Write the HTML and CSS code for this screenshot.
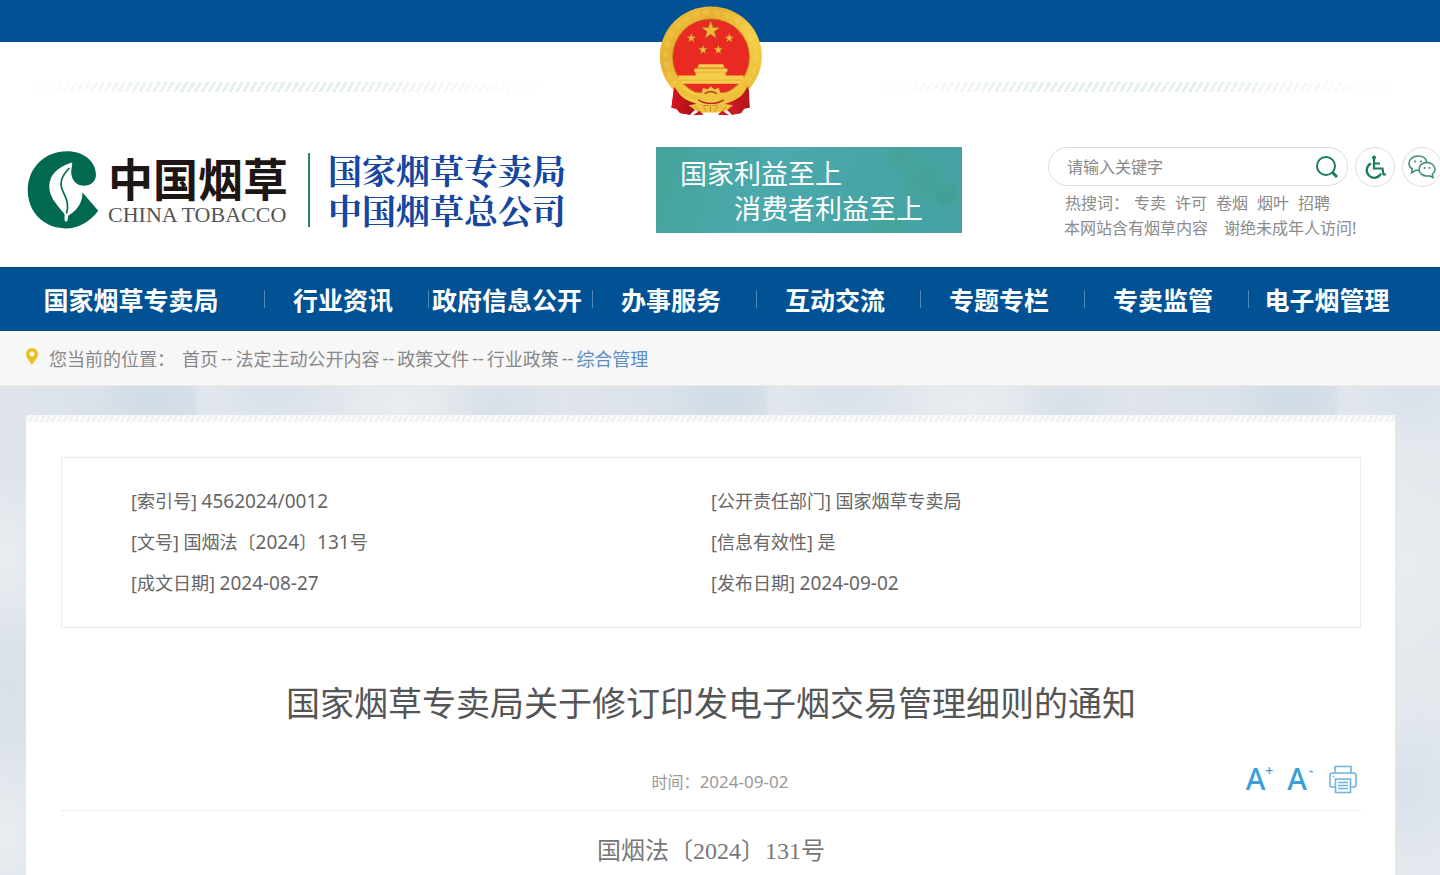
FILE: index.html
```html
<!DOCTYPE html>
<html lang="zh-CN">
<head>
<meta charset="utf-8">
<meta name="viewport" content="width=device-width, initial-scale=1">
<title>国家烟草专卖局关于修订印发电子烟交易管理细则的通知</title>
<link rel="stylesheet" href="styles.css">
</head>
<body>
<header class="header">
  <div class="topbar"></div>
  <svg class="emblem" viewBox="55 15 315 335" aria-label="国徽" role="img">
    <defs>
      <linearGradient id="gold" x1="0" y1="0" x2="1" y2="1">
        <stop offset="0" stop-color="#f3c63e"/><stop offset=".3" stop-color="#e6b033"/>
        <stop offset=".6" stop-color="#f6cf45"/><stop offset="1" stop-color="#e9b632"/>
      </linearGradient>
      <linearGradient id="silk" x1="0" y1="0" x2="1" y2="0">
        <stop offset="0" stop-color="#d8161c"/><stop offset=".3" stop-color="#a80f16"/>
        <stop offset=".6" stop-color="#e0232a"/><stop offset="1" stop-color="#b3121a"/>
      </linearGradient>
      <path id="star" d="M0-10 2.4-3.2 9.5-3.1 3.8 1.2 5.9 8.1 0 4-5.9 8.1-3.8 1.2-9.5-3.1-2.4-3.2Z"/>
    </defs>
    <path fill="url(#silk)" d="M105 252 96 322 112 327 122 339 152 344 160 318 268 318 276 344 304 339 314 325 329 323 328 252Z"/>
    <ellipse cx="213.500" cy="168" rx="153" ry="149" fill="url(#gold)"/>
    <ellipse cx="213.500" cy="168" rx="136" ry="132" fill="none" stroke="#f9dc67" stroke-width="14" stroke-dasharray="19 13" opacity=".25"/>
    <circle cx="214" cy="171" r="117" fill="#c98a22"/>
    <circle cx="214" cy="171" r="114" fill="#e92a22"/>
    <g fill="#f2b83a" stroke="#9c6a2a" stroke-width=".6">
      <use href="#star" transform="translate(213 91) scale(2.900)"/>
      <use href="#star" transform="translate(155 114) scale(1.450)"/>
      <use href="#star" transform="translate(269 114) scale(1.450)"/>
      <use href="#star" transform="translate(190 149) scale(1.450)"/>
      <use href="#star" transform="translate(236 149) scale(1.450)"/>
    </g>
    <path fill="#f5ce4b" d="M178 192h72l5 11h-82ZM164 205h99v11h-99ZM168 216h90v10h-90ZM116 226h196v14H118ZM120 238h190l-8 13H128Z"/>
    <path stroke="#d9952f" stroke-width="1.500" fill="none" d="M174 205h82M166 216h94M122 240h184"/>
    <path fill="url(#silk)" d="M104 253c12 36 42 60 80 60l-34 31-30-6-10-12-15-3ZM325 253c-12 36-42 60-80 60l32 31 28-6 8-13 17-2Z"/>
    <path fill="none" stroke="#edbf3b" stroke-width="15" d="M106 252c24 32 54 42 80 38M321 252c-24 32-54 42-80 38"/>
    <g fill="#f1c342">
      <path d="m176 291-8-14 18 1 4-15 13 5 11-10 10 10 13-5 5 15 18-1-9 14c-18 14-56 14-75 0Z"/>
      <path d="m147 315 32-5c18 12 48 12 68 0l33 5-28 22h-76Z"/>
    </g>
    <path fill="none" stroke="#b9271d" stroke-width="4" d="M176 299c20 14 56 14 76 0M195 281c10-9 26-9 36 0"/>
    <path fill="none" stroke="#c78324" stroke-width="2.500" d="M212 334v-16M199 334l-8-14M225 334l9-14M178 330l-12-10M248 330l12-10"/>
    <path fill="#c9161d" d="m160 345 20-13 12 12ZM234 344l14-12 20 13Z"/>
  </svg>
  <div class="deco"><span class="deco-line"></span><span class="deco-line"></span></div>
  <div class="head-row">
    <div class="brand">
      <svg class="brand-mark" viewBox="45 20 225 250" aria-hidden="true">
        <path fill="#00694f" d="M258 99c0 19-16 33-37 33-20 0-34-13-38-34-2-12 2-25 3-37-27 8-62 24-69 60-8 42 24 69 45 97 2 8-3 18 4 24 8-1 5-9 8-19 22-13 43-34 43-70l48 55c-26 34-60 54-99 54-67 0-116-50-116-116C50 78 101 27 169 27c52 0 89 31 89 72Z"/>
        <path fill="none" stroke="#00694f" stroke-width="5" d="M177 78c-24 24-32 45-21 68 9 20 22 40 12 71"/>
      </svg>
      <div class="brand-name">
        <span class="brand-cn">中国烟草</span>
        <span class="brand-en">CHINA TOBACCO</span>
      </div>
      <div class="brand-org"><span>国家烟草专卖局</span><span>中国烟草总公司</span></div>
    </div>
    <div class="slogan"><span>国家利益至上</span><span class="slogan-second">消费者利益至上</span></div>
    <div class="tools">
      <form class="search-row">
        <div class="search">
          <input class="search-input" type="text" placeholder="请输入关键字" aria-label="请输入关键字">
          <button class="search-btn" type="button" aria-label="搜索">
            <svg width="24" height="24" viewBox="0 0 24 24" fill="none" stroke="#1b7a5c" stroke-width="2"><circle cx="11" cy="11" r="9"/><path d="m17 17 5 5" stroke-width="3"/></svg>
          </button>
        </div>
        <button class="round" type="button" aria-label="无障碍">
          <svg width="24" height="26" viewBox="0 0 24 26" fill="none" stroke="#1b7a5c" stroke-width="2.200"><circle cx="11" cy="3.500" r="2" fill="#1b7a5c" stroke="none"/><path d="M11 5v9.500h8.500l1 6h2.500M11 9.500h6"/><path d="M8 9.500a7.500 7.500 0 1 0 10 10"/></svg>
        </button>
        <button class="round" type="button" aria-label="微信">
          <svg width="28" height="24" viewBox="0 0 28 24" fill="none" stroke="#3c8b70" stroke-width="1.500"><path d="M11 15.500c-1 0-2-.1-3-.4L3.500 18l.8-4C2.200 12.700 1 10.700 1 8.500 1 4.300 5 1 10 1c4.600 0 8 2.500 8.700 6"/><path d="M19 7.500c4.500 0 8 3 8 6.700 0 2-1 3.800-2.700 5l.7 3.300-3.300-1.700c-.9.200-1.700.3-2.700.3-4.500 0-8-3-8-6.900S14.500 7.500 19 7.500Z"/><g fill="#3c8b70" stroke="none"><circle cx="7" cy="6.500" r="1.100"/><circle cx="13" cy="6.500" r="1.100"/><circle cx="16.500" cy="13" r="1"/><circle cx="21.500" cy="13" r="1"/></g></svg>
        </button>
      </form>
      <div class="hot"><span class="hot-label">热搜词：</span><a href="#">专卖</a><a href="#">许可</a><a href="#">卷烟</a><a href="#">烟叶</a><a href="#">招聘</a></div>
      <div class="notice"><span>本网站含有烟草内容</span><span>谢绝未成年人访问!</span></div>
    </div>
  </div>
</header>

<nav class="nav">
  <a href="#">国家烟草专卖局</a>
  <a href="#">行业资讯</a>
  <a href="#">政府信息公开</a>
  <a href="#">办事服务</a>
  <a href="#">互动交流</a>
  <a href="#">专题专栏</a>
  <a href="#">专卖监管</a>
  <a href="#">电子烟管理</a>
</nav>

<div class="crumbs">
  <svg class="pin" width="12" height="17" viewBox="0 0 12 17" aria-hidden="true"><path fill="#e9c31c" fill-rule="evenodd" d="M6 0a6 6 0 0 1 6 6c0 3.500-3.500 7-6 11C3.500 13 0 9.500 0 6a6 6 0 0 1 6-6Zm0 3.500a2.500 2.500 0 1 0 0 5 2.500 2.500 0 0 0 0-5Z"/></svg>
  <span class="crumbs-label">您当前的位置：</span>
  <a href="#">首页</a><span class="sep">--</span><a href="#">法定主动公开内容</a><span class="sep">--</span><a href="#">政策文件</a><span class="sep">--</span><a href="#">行业政策</a><span class="sep">--</span><a class="current" href="#">综合管理</a>
</div>

<main class="main">
  <div class="card-edge"></div>
  <article class="card">
    <div class="info">
      <div>[索引号] <span class="num">4562024/0012</span></div>
      <div>[公开责任部门] 国家烟草专卖局</div>
      <div>[文号] 国烟法〔<span class="num">2024</span>〕<span class="num">131</span>号</div>
      <div>[信息有效性] 是</div>
      <div>[成文日期] <span class="num">2024-08-27</span></div>
      <div>[发布日期] <span class="num">2024-09-02</span></div>
    </div>
    <h1 class="title">国家烟草专卖局关于修订印发电子烟交易管理细则的通知</h1>
    <div class="meta">
      <div class="time">时间：<span class="time-num">2024-09-02</span></div>
      <div class="actions">
        <button type="button" class="font-btn" aria-label="放大字体">A<span class="sign">+</span></button>
        <button type="button" class="font-btn" aria-label="缩小字体">A<span class="sign">-</span></button>
        <button type="button" class="print-btn" aria-label="打印">
          <svg width="28" height="29" viewBox="0 0 28 29" fill="none" stroke="#6db3dd" stroke-width="1.600"><path d="M6 8V1.500h16V8M6 22H3a2 2 0 0 1-2-2v-9.500A2.500 2.500 0 0 1 3.500 8h21a2.500 2.500 0 0 1 2.500 2.500V20a2 2 0 0 1-2 2h-3"/><path d="M6.500 14h15v13.500h-15zM9 17.500h10M9 20.500h10M9 23.500h10M3.500 11.500h2"/></svg>
        </button>
      </div>
    </div>
    <p class="docno">国烟法〔2024〕131号</p>
  </article>
</main>
</body>
</html>
```
FILE: styles.css
```css
* { box-sizing: border-box; }

body {
  margin: 0;
  background: #fff;
  color: #666;
  font-family: "Noto Sans", "Noto Sans CJK SC", sans-serif;
  font-size: 18px;
}

a { color: inherit; text-decoration: none; }
button { padding: 0; border: 0; background: none; font-family: inherit; cursor: pointer; }
svg { display: block; flex-shrink: 0; }

.header { position: relative; padding-bottom: 26px; overflow: clip; }
.topbar { height: 42px; background: #005294; }

.emblem {
  position: absolute;
  top: 5px;
  left: calc(50% - 62px);
  width: 105px;
  height: 112px;
}

.deco {
  display: flex;
  justify-content: space-between;
  margin: 40px 45px 0 26px;
}
.deco-line {
  width: 38%;
  height: 10px;
  background: repeating-linear-gradient(120deg, #e6f0ef 0 3px, #fff 3px 6px);
  mask-image: linear-gradient(90deg, transparent, #000 30%, #000 60%, transparent);
}

.head-row {
  display: grid;
  grid-template-columns: minmax(0, 630fr) minmax(0, 392fr) minmax(0, 392fr);
  align-items: start;
  padding: 55px 0 0 26px;
}

.brand { display: flex; align-items: center; padding-top: 2px; }
.brand-mark { width: 74px; height: 82px; }
.brand-name {
  display: flex;
  flex-direction: column;
  margin-left: 8px;
  padding-right: 20px;
  border-right: 2px solid #2b8468;
  white-space: nowrap;
}
.brand-cn {
  color: #1d1614;
  font-family: "Noto Sans CJK SC", sans-serif;
  font-size: 45px;
  font-weight: 700;
  line-height: 50px;
}
.brand-en {
  color: #555;
  font-family: "Liberation Serif", serif;
  font-size: 22px;
  line-height: 24px;
}
.brand-org {
  display: flex;
  flex-direction: column;
  margin-left: 18px;
  color: #1546a0;
  font-family: "Noto Serif CJK SC", "Noto Sans CJK SC", serif;
  font-size: 34px;
  font-weight: 700;
  line-height: 40px;
  white-space: nowrap;
}

.slogan {
  display: flex;
  flex-direction: column;
  width: 306px;
  padding: 8px 24px;
  background:
    radial-gradient(circle at 80% 10%, #43a29199 0 8px, transparent 18px),
    radial-gradient(circle at 87% 38%, #43a29199 0 12px, transparent 26px),
    radial-gradient(circle at 95% 56%, #3f9f8c99 0 8px, transparent 14px),
    radial-gradient(circle at 76% 96%, #45a59499 0 8px, transparent 20px),
    linear-gradient(110deg, #44a499, #4ba8ac 35%, #45a2a2);
  color: #fff;
  font-family: "Noto Sans CJK SC", sans-serif;
  font-size: 27px;
  line-height: 35px;
  white-space: nowrap;
}
.slogan-second { padding-left: 54px; }

.tools { color: #8a8a8a; font-size: 16px; line-height: 25px; white-space: nowrap; }
.search-row { display: flex; gap: 7px; margin-bottom: 4px; }
.search {
  display: flex;
  flex: 0 0 300px;
  align-items: center;
  height: 39px;
  padding: 0 8px 0 18px;
  border: 1px solid #dcdcdc;
  border-radius: 20px;
}
.search-input {
  flex: 1;
  min-width: 0;
  padding: 0;
  border: 0;
  outline: 0;
  background: none;
  color: #777;
  font-family: inherit;
  font-size: 16px;
}
.search-input::placeholder { color: #888; opacity: 1; }
.round {
  display: flex;
  flex: 0 0 40px;
  align-items: center;
  justify-content: center;
  height: 40px;
  border: 1px solid #dcdcdc;
  border-radius: 50%;
}
.hot { display: flex; gap: 9px; padding-left: 17px; }
.hot-label { margin-right: -4px; }
.notice { display: flex; gap: 16px; padding-left: 16px; }

.nav {
  display: grid;
  grid-template-columns: 264fr repeat(7, 164fr);
  align-items: center;
  height: 64px;
  padding-right: 28px;
  background: #005294;
  color: #fff;
  font-family: "Noto Sans CJK SC", sans-serif;
  font-size: 25px;
  font-weight: 700;
  line-height: 64px;
  text-align: center;
  white-space: nowrap;
}
.nav a {
  padding-right: 6px;
  background: linear-gradient(#4f88b8, #4f88b8) 0 50% / 1px 18px no-repeat;
}
.nav a:first-child { padding-right: 2px; background: none; }

.crumbs {
  display: flex;
  align-items: center;
  height: 55px;
  padding-left: 26px;
  border-bottom: 1px solid #ececec;
  background: #f7f7f7;
  color: #888;
  white-space: nowrap;
}
.pin { margin: 0 11px 4px 0; }
.crumbs-label { margin-right: 7px; }
.sep { padding: 0 3px; }
.current { color: #5b8fc4; }

.main {
  min-height: 490px;
  padding: 29px 45px 0 26px;
  background:
    radial-gradient(ellipse 60px 50px at 150px 16px, #d0dbe5, transparent),
    radial-gradient(ellipse 90px 60px at 270px 8px, #d9e1e9, transparent),
    radial-gradient(ellipse 70px 90px at 400px 30px, #e9edf1, transparent),
    radial-gradient(ellipse 60px 40px at 500px 20px, #d7dfe7, transparent),
    radial-gradient(ellipse 60px 90px at 10px 170px, #e8edf1, transparent),
    radial-gradient(ellipse 60px 80px at 10px 300px, #d9e0e9, transparent),
    radial-gradient(ellipse 60px 90px at 10px 450px, #e8edf1, transparent),
    radial-gradient(ellipse 60px 90px at 270px 180px, #e8ecf1, transparent),
    radial-gradient(ellipse 60px 90px at 270px 400px, #d9e1e9, transparent),
    linear-gradient(90deg, #dee4ea, #d8e0e8 34%, #e5eaef 35%, #dfe5eb);
  background-size: 570px 570px;
}
.card-edge {
  height: 7px;
  background: repeating-linear-gradient(120deg, #eef0f1 0 2px, #fafafa 2px 5px);
}
.card { padding: 35px 34px 0 35px; background: #fff; }

.info {
  display: grid;
  grid-template-columns: 1fr 1fr;
  padding: 23px 69px;
  border: 1px solid #ececec;
  line-height: 41px;
}
.num { font-size: 19px; }

.title {
  margin: 48px 0 0;
  color: #555;
  font-family: "Noto Sans CJK SC", sans-serif;
  font-size: 34px;
  font-weight: 400;
  line-height: 52px;
  text-align: center;
}

.meta {
  display: grid;
  grid-template-columns: 130px 1fr 112px;
  align-items: center;
  height: 60px;
  margin-top: 23px;
  border-bottom: 1px solid #eee;
}
.time { grid-column: 2; color: #999; font-size: 16px; text-align: center; }
.time-num { font-size: 17px; }
.actions { display: flex; align-items: center; gap: 14px; justify-content: flex-end; padding-right: 4px; margin-bottom: 3px; }
.font-btn {
  display: flex;
  color: #3d9fd6;
  font-size: 30px;
  font-weight: 500;
  line-height: 36px;
}
.sign { width: 8px; font-size: 14px; line-height: 20px; }

.docno {
  margin: 0;
  padding: 20px 0 26px;
  color: #777;
  font-family: "Liberation Serif", "Noto Sans CJK SC", serif;
  font-size: 24px;
  line-height: 40px;
  text-align: center;
}
```
